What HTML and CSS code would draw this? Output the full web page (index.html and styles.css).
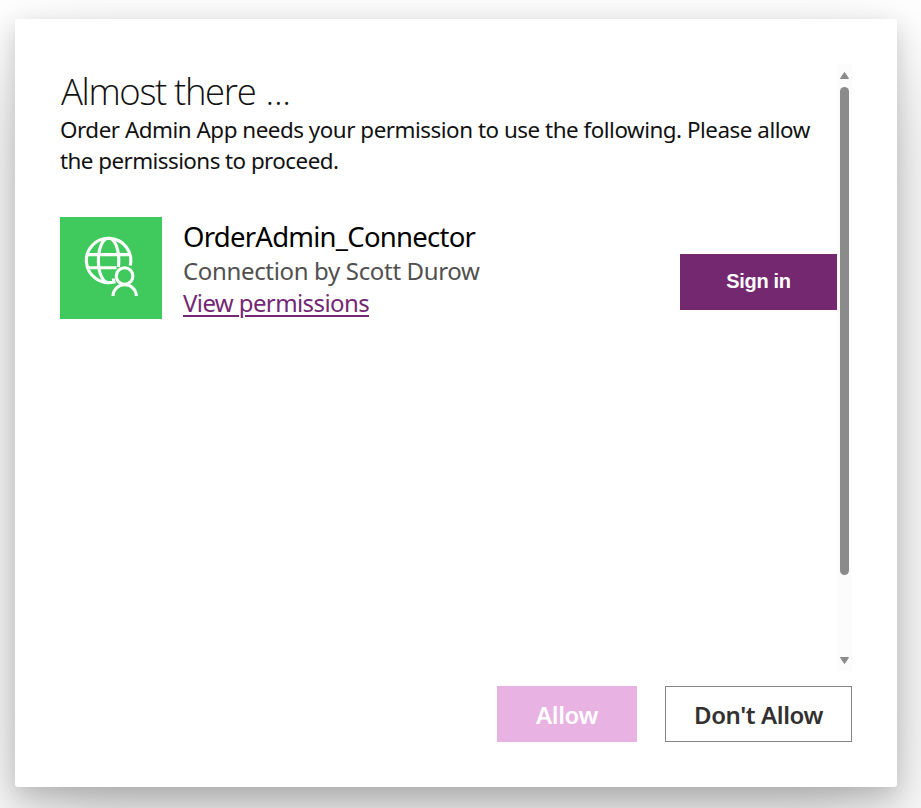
FILE: index.html
```html
<!DOCTYPE html>
<html lang="en">
<head>
<meta charset="utf-8">
<title>Almost there ...</title>
<link rel="stylesheet" href="styles.css">
</head>
<body>
<main class="dialog">
  <div class="body">
    <div class="content">
      <h1 class="title">Almost there <span class="dots">...</span></h1>
      <p class="intro">Order Admin App needs your permission to use the following. Please allow<br><span class="intro-second">the permissions to proceed.</span></p>
      <section class="connection">
        <div class="tile">
          <svg viewBox="0 0 102 102" width="102" height="102" fill="none" stroke="#fff" stroke-width="3.1">
            <path d="M53.3 61.5L54 65.03A22.2 22.2 0 1 1 70.2 48.5"/>
            <path d="M48.6 65.7C42.5 65.7 38.4 55.8 38.4 43.5S42.5 21.3 48.6 21.3S58.8 31.2 58.8 43.5C58.8 46 58.7 47.5 58.4 50"/>
            <path d="M28 37.6H69.5M28 50.8H56.5"/>
            <circle cx="64.6" cy="59" r="8.3"/>
            <path d="M53.1 79V77.8C53.8 72 58.7 67.7 64.7 67.7S75.6 72 76.3 77.8V79"/>
          </svg>
        </div>
        <div class="details">
          <div class="name">OrderAdmin_Connector</div>
          <div class="owner">Connection by Scott Durow</div>
          <a class="permissions" href="#">View permissions</a>
        </div>
        <button class="signin">Sign in</button>
      </section>
    </div>
    <div class="scrollbar">
      <svg width="9" height="7" viewBox="0 0 9 7"><path d="M4.5.5L8.5 6.5H.5Z" fill="#8b8b8b" stroke="#8b8b8b" stroke-linejoin="round"/></svg>
      <div class="thumb"></div>
      <svg class="down" width="9" height="7" viewBox="0 0 9 7"><path d="M.5.5H8.5L4.5 6.5Z" fill="#8b8b8b" stroke="#8b8b8b" stroke-linejoin="round"/></svg>
    </div>
  </div>
  <footer class="actions">
    <button class="allow" disabled>Allow</button>
    <button class="deny">Don't Allow</button>
  </footer>
</main>
</body>
</html>
```
FILE: styles.css
```css
* { box-sizing: border-box; }
body {
  margin: 0;
  height: 808px;
  overflow: hidden;
  padding: 19px 24px 21px 15px;
  background: #fff;
  font-family: "Noto Sans", "Open Sans", sans-serif;
}
.dialog {
  height: 768px;
  padding: 45px 45px 0;
  background: #fff;
  border-radius: 3px;
  box-shadow: 0 45px 101px rgba(0,0,0,.22), 0 8.4px 25px rgba(0,0,0,.18);
}
.body { display: flex; height: 607px; }
.content { flex: 1; min-width: 0; white-space: nowrap; }
.title {
  margin: 3px 0 -1px;
  padding-left: 1px;
  font-family: "Open Sans", sans-serif;
  font-size: 36.5px;
  line-height: 48px;
  font-weight: 300;
  letter-spacing: -1.35px;
  color: #111;
}
.dots { margin-left: 2px; letter-spacing: -.3px; }
.intro {
  margin: 0;
  font-size: 22.4px;
  line-height: 31px;
  letter-spacing: -.475px;
  color: #111;
}
.intro-second { letter-spacing: -.55px; }
.connection { display: flex; height: 102px; margin-top: 41px; }
.tile { width: 102px; height: 102px; background: #40ca5e; }
.tile svg { display: block; }
.details { flex: 1; padding-left: 21px; }
.name { padding-top: 1px; font-size: 27.5px; line-height: 38px; letter-spacing: -.75px; color: #000; }
.owner { margin-top: -1px; font-size: 24px; line-height: 32px; letter-spacing: -.34px; color: #505050; }
.permissions {
  display: inline-block;
  font-size: 24px;
  line-height: 32px;
  letter-spacing: -.6px;
  color: #742774;
  text-decoration: underline;
  text-decoration-thickness: 2px;
  text-underline-offset: 3px;
}
button { height: 56px; padding: 0; border: 0; white-space: nowrap; }
.signin {
  width: 157px;
  margin-top: 37px;
  padding-bottom: 2px;
  background: #742870;
  color: #fff;
  font: bold 20px "Liberation Sans", sans-serif;
  letter-spacing: -.3px;
}
.scrollbar {
  display: flex;
  flex-direction: column;
  align-items: center;
  width: 15px;
  padding: 8px 0 7px;
  background: #fcfcfc;
}
.scrollbar svg { display: block; flex: none; }
.thumb { width: 9px; height: 488px; margin-top: 8px; border-radius: 5px; background: #8b8b8b; }
.down { margin-top: auto; }
.actions { display: flex; justify-content: flex-end; gap: 28px; margin-top: 15px; }
.allow, .deny { font: 600 24px "Noto Sans", "Open Sans", sans-serif; letter-spacing: -.4px; }
.allow { width: 140px; background: #e8b3e3; color: #fff; }
.deny { width: 187px; border: 1px solid #858585; background: #fff; color: #323130; }
```
